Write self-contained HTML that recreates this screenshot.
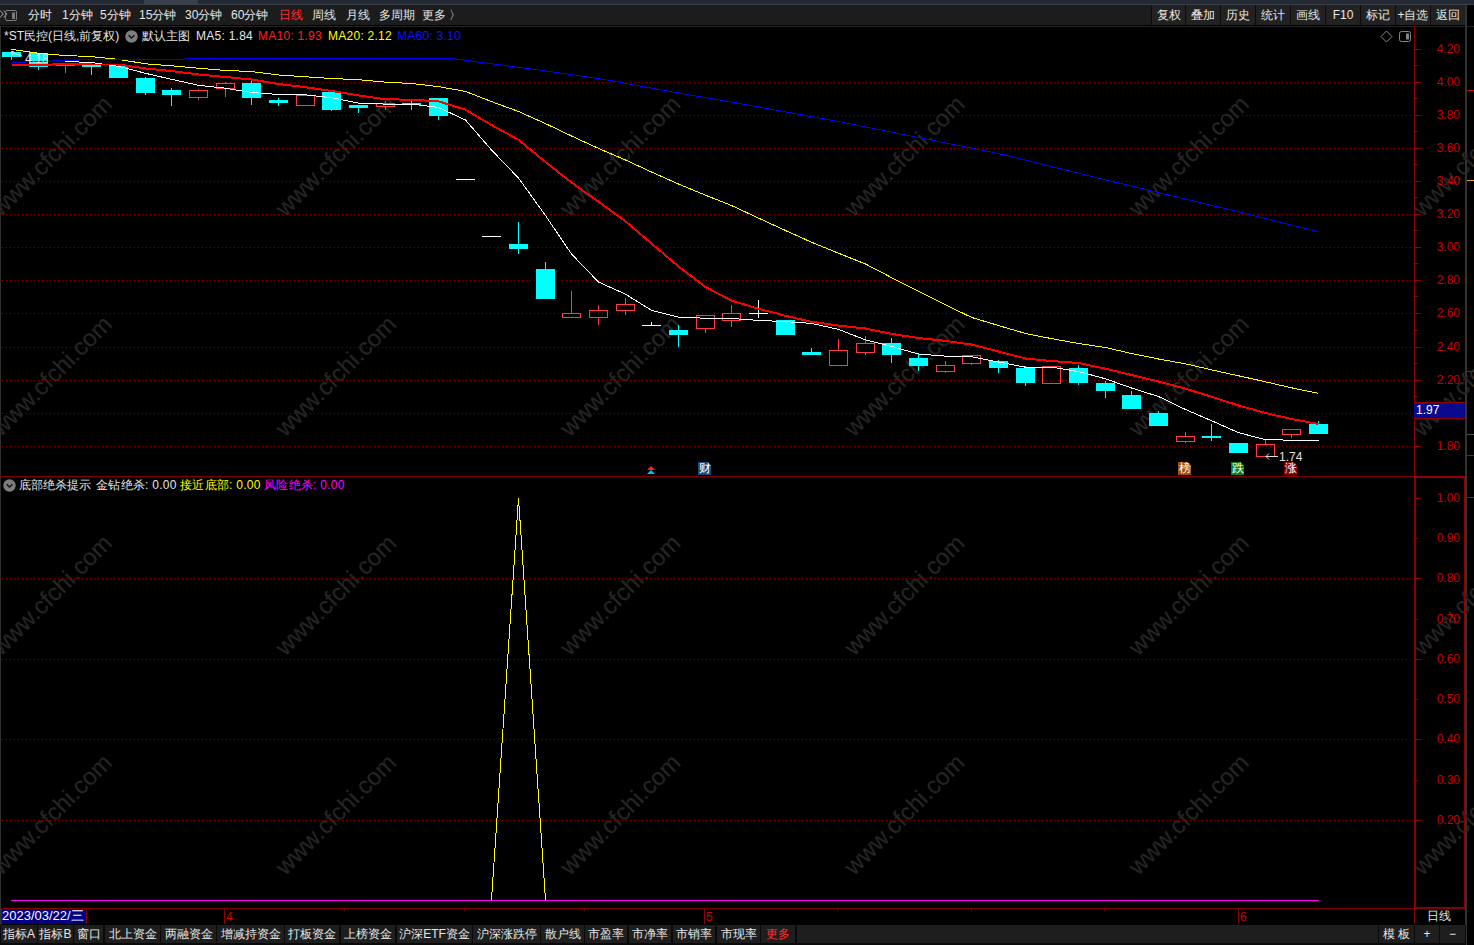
<!DOCTYPE html>
<html><head><meta charset="utf-8">
<style>
*{margin:0;padding:0;box-sizing:border-box}
html,body{width:1474px;height:945px;overflow:hidden;background:#000;font-family:"Liberation Sans",sans-serif;}
.a{position:absolute;white-space:nowrap;line-height:1}
.ls{letter-spacing:0.26px}
#top{position:absolute;left:0;top:0;width:1474px;height:4px;background:#242a33;border-bottom:0}
#tb{position:absolute;left:0;top:5px;width:1465px;height:20px;background:#1c1c1c}
.ti{position:absolute;top:9px;font-size:12px;color:#e6e6e6;line-height:12px}
.rb{position:absolute;top:5px;height:20px;background:#222;color:#e6e6e6;font-size:12px;line-height:20px;text-align:center}
.ax{position:absolute;font-size:12px;color:#c80000;line-height:12px;text-align:right;width:40px}
.tab{position:absolute;top:925px;height:18px;background:#1e1e1e;color:#e6e6e6;font-size:12px;line-height:18px;text-align:center}
</style></head><body>
<div id="top"></div><div style="position:absolute;left:0;top:4px;width:1474px;height:1px;background:#3a4049"></div><div style="position:absolute;left:144px;top:0;width:54px;height:5px;background:#3a4049"></div>
<div id="tb"></div><div style="position:absolute;left:1151px;top:5px;width:314px;height:20px;background:#0c0c0c"></div>
<!-- chart frame -->
<div style="position:absolute;left:0;top:25px;width:1474px;height:1px;background:#000"></div><div style="position:absolute;left:0;top:26px;width:1474px;height:1px;background:#262626"></div>
<div style="position:absolute;left:0;top:26px;width:1px;height:899px;background:#303030"></div>
<div style="position:absolute;left:1465px;top:5px;width:2px;height:940px;background:#333"></div>

<svg width="1474" height="945" style="position:absolute;left:0;top:0">
<g fill="#252525" font-family="Liberation Sans, sans-serif" font-size="24" text-anchor="middle" stroke="#252525" stroke-width="0.2"><text x="51.5" y="164.0" transform="rotate(-45 51.5 156.0)">www.cfchi.com</text><text x="335.8" y="164.0" transform="rotate(-45 335.8 156.0)">www.cfchi.com</text><text x="620.1" y="164.0" transform="rotate(-45 620.1 156.0)">www.cfchi.com</text><text x="904.4" y="164.0" transform="rotate(-45 904.4 156.0)">www.cfchi.com</text><text x="1188.7" y="164.0" transform="rotate(-45 1188.7 156.0)">www.cfchi.com</text><text x="1473.0" y="164.0" transform="rotate(-45 1473.0 156.0)">www.cfchi.com</text><text x="51.5" y="384.0" transform="rotate(-45 51.5 376.0)">www.cfchi.com</text><text x="335.8" y="384.0" transform="rotate(-45 335.8 376.0)">www.cfchi.com</text><text x="620.1" y="384.0" transform="rotate(-45 620.1 376.0)">www.cfchi.com</text><text x="904.4" y="384.0" transform="rotate(-45 904.4 376.0)">www.cfchi.com</text><text x="1188.7" y="384.0" transform="rotate(-45 1188.7 376.0)">www.cfchi.com</text><text x="1473.0" y="384.0" transform="rotate(-45 1473.0 376.0)">www.cfchi.com</text><text x="51.5" y="603.0" transform="rotate(-45 51.5 595.0)">www.cfchi.com</text><text x="335.8" y="603.0" transform="rotate(-45 335.8 595.0)">www.cfchi.com</text><text x="620.1" y="603.0" transform="rotate(-45 620.1 595.0)">www.cfchi.com</text><text x="904.4" y="603.0" transform="rotate(-45 904.4 595.0)">www.cfchi.com</text><text x="1188.7" y="603.0" transform="rotate(-45 1188.7 595.0)">www.cfchi.com</text><text x="1473.0" y="603.0" transform="rotate(-45 1473.0 595.0)">www.cfchi.com</text><text x="51.5" y="822.5" transform="rotate(-45 51.5 814.5)">www.cfchi.com</text><text x="335.8" y="822.5" transform="rotate(-45 335.8 814.5)">www.cfchi.com</text><text x="620.1" y="822.5" transform="rotate(-45 620.1 814.5)">www.cfchi.com</text><text x="904.4" y="822.5" transform="rotate(-45 904.4 814.5)">www.cfchi.com</text><text x="1188.7" y="822.5" transform="rotate(-45 1188.7 814.5)">www.cfchi.com</text><text x="1473.0" y="822.5" transform="rotate(-45 1473.0 814.5)">www.cfchi.com</text></g>
<g stroke="#800000" stroke-width="1" stroke-dasharray="1 3" shape-rendering="crispEdges"><line x1="2" y1="82.5" x2="1414" y2="82.5"/><line x1="2" y1="115.5" x2="1414" y2="115.5"/><line x1="2" y1="148.5" x2="1414" y2="148.5"/><line x1="2" y1="181.5" x2="1414" y2="181.5"/><line x1="2" y1="214.5" x2="1414" y2="214.5"/><line x1="2" y1="247.5" x2="1414" y2="247.5"/><line x1="2" y1="280.5" x2="1414" y2="280.5"/><line x1="2" y1="313.5" x2="1414" y2="313.5"/><line x1="2" y1="347.5" x2="1414" y2="347.5"/><line x1="2" y1="380.5" x2="1414" y2="380.5"/><line x1="2" y1="413.5" x2="1414" y2="413.5"/><line x1="2" y1="446.5" x2="1414" y2="446.5"/><line x1="2" y1="578.5" x2="1414" y2="578.5"/><line x1="2" y1="659.5" x2="1414" y2="659.5"/><line x1="2" y1="739.5" x2="1414" y2="739.5"/><line x1="2" y1="820.5" x2="1414" y2="820.5"/></g>
<g shape-rendering="crispEdges"><rect x="2" y="52" width="19" height="5" fill="#00ffff"/><rect x="11" y="57" width="1" height="3" fill="#00ffff"/><rect x="29" y="53" width="19" height="14" fill="#00ffff"/><rect x="38" y="67" width="1" height="3" fill="#00ffff"/><rect x="56.5" y="63.5" width="18" height="2" fill="none" stroke="#ff3b3b"/><rect x="65" y="66" width="1" height="7" fill="#ff3b3b"/><rect x="82" y="65" width="19" height="2" fill="#00ffff"/><rect x="91" y="67" width="1" height="8" fill="#00ffff"/><rect x="109" y="66" width="19" height="12" fill="#00ffff"/><rect x="136" y="78" width="19" height="15" fill="#00ffff"/><rect x="145" y="77" width="1" height="1" fill="#00ffff"/><rect x="145" y="93" width="1" height="2" fill="#00ffff"/><rect x="162" y="90" width="19" height="5" fill="#00ffff"/><rect x="171" y="88" width="1" height="2" fill="#00ffff"/><rect x="171" y="95" width="1" height="11" fill="#00ffff"/><rect x="189.5" y="90.5" width="18" height="7" fill="none" stroke="#ff3b3b"/><rect x="198" y="89" width="1" height="1" fill="#ff3b3b"/><rect x="198" y="98" width="1" height="2" fill="#ff3b3b"/><rect x="216.5" y="83.5" width="18" height="5" fill="none" stroke="#ff3b3b"/><rect x="225" y="82" width="1" height="1" fill="#ff3b3b"/><rect x="225" y="89" width="1" height="8" fill="#ff3b3b"/><rect x="242" y="83" width="19" height="15" fill="#00ffff"/><rect x="251" y="81" width="1" height="2" fill="#00ffff"/><rect x="251" y="98" width="1" height="7" fill="#00ffff"/><rect x="269" y="100" width="19" height="3" fill="#00ffff"/><rect x="278" y="98" width="1" height="2" fill="#00ffff"/><rect x="278" y="103" width="1" height="3" fill="#00ffff"/><rect x="296.5" y="95.5" width="18" height="10" fill="none" stroke="#ff3b3b"/><rect x="322" y="92" width="19" height="18" fill="#00ffff"/><rect x="331" y="110" width="1" height="1" fill="#00ffff"/><rect x="349" y="105" width="19" height="3" fill="#00ffff"/><rect x="358" y="108" width="1" height="5" fill="#00ffff"/><rect x="376.5" y="103.5" width="18" height="3" fill="none" stroke="#ff3b3b"/><rect x="385" y="101" width="1" height="2" fill="#ff3b3b"/><rect x="385" y="107" width="1" height="3" fill="#ff3b3b"/><rect x="402" y="103" width="19" height="2" fill="#00ffff"/><rect x="411" y="101" width="1" height="2" fill="#00ffff"/><rect x="411" y="105" width="1" height="5" fill="#00ffff"/><rect x="429" y="98" width="19" height="18" fill="#00ffff"/><rect x="438" y="116" width="1" height="4" fill="#00ffff"/><rect x="456" y="179" width="19" height="1" fill="#ffffff"/><rect x="482" y="236" width="19" height="1" fill="#ffffff"/><rect x="509" y="244" width="19" height="5" fill="#00ffff"/><rect x="518" y="222" width="1" height="22" fill="#00ffff"/><rect x="518" y="249" width="1" height="5" fill="#00ffff"/><rect x="536" y="269" width="19" height="30" fill="#00ffff"/><rect x="545" y="262" width="1" height="7" fill="#00ffff"/><rect x="562.5" y="313.5" width="18" height="4" fill="none" stroke="#ff3b3b"/><rect x="571" y="291" width="1" height="22" fill="#ff3b3b"/><rect x="589.5" y="310.5" width="18" height="7" fill="none" stroke="#ff3b3b"/><rect x="598" y="305" width="1" height="5" fill="#ff3b3b"/><rect x="598" y="318" width="1" height="7" fill="#ff3b3b"/><rect x="616.5" y="304.5" width="18" height="6" fill="none" stroke="#ff3b3b"/><rect x="625" y="298" width="1" height="6" fill="#ff3b3b"/><rect x="625" y="311" width="1" height="4" fill="#ff3b3b"/><rect x="642" y="325" width="19" height="1" fill="#ffffff"/><rect x="651" y="322" width="1" height="3" fill="#ffffff"/><rect x="669" y="330" width="19" height="5" fill="#00ffff"/><rect x="678" y="325" width="1" height="5" fill="#00ffff"/><rect x="678" y="335" width="1" height="12" fill="#00ffff"/><rect x="696.5" y="315.5" width="18" height="13" fill="none" stroke="#ff3b3b"/><rect x="705" y="329" width="1" height="4" fill="#ff3b3b"/><rect x="722.5" y="313.5" width="18" height="7" fill="none" stroke="#ff3b3b"/><rect x="731" y="305" width="1" height="8" fill="#ff3b3b"/><rect x="731" y="321" width="1" height="6" fill="#ff3b3b"/><rect x="749" y="313" width="19" height="1" fill="#ffffff"/><rect x="758" y="300" width="1" height="13" fill="#ffffff"/><rect x="758" y="314" width="1" height="4" fill="#ffffff"/><rect x="776" y="320" width="19" height="15" fill="#00ffff"/><rect x="802" y="352" width="19" height="3" fill="#00ffff"/><rect x="811" y="348" width="1" height="4" fill="#00ffff"/><rect x="829.5" y="350.5" width="18" height="15" fill="none" stroke="#ff3b3b"/><rect x="838" y="339" width="1" height="11" fill="#ff3b3b"/><rect x="856.5" y="343.5" width="18" height="9" fill="none" stroke="#ff3b3b"/><rect x="865" y="336" width="1" height="7" fill="#ff3b3b"/><rect x="865" y="353" width="1" height="2" fill="#ff3b3b"/><rect x="882" y="343" width="19" height="12" fill="#00ffff"/><rect x="891" y="338" width="1" height="5" fill="#00ffff"/><rect x="891" y="355" width="1" height="8" fill="#00ffff"/><rect x="909" y="358" width="19" height="8" fill="#00ffff"/><rect x="918" y="353" width="1" height="5" fill="#00ffff"/><rect x="918" y="366" width="1" height="5" fill="#00ffff"/><rect x="936.5" y="365.5" width="18" height="6" fill="none" stroke="#ff3b3b"/><rect x="945" y="361" width="1" height="4" fill="#ff3b3b"/><rect x="945" y="372" width="1" height="1" fill="#ff3b3b"/><rect x="962.5" y="355.5" width="18" height="8" fill="none" stroke="#ff3b3b"/><rect x="971" y="364" width="1" height="1" fill="#ff3b3b"/><rect x="989" y="361" width="19" height="7" fill="#00ffff"/><rect x="998" y="360" width="1" height="1" fill="#00ffff"/><rect x="998" y="368" width="1" height="5" fill="#00ffff"/><rect x="1016" y="368" width="19" height="15" fill="#00ffff"/><rect x="1025" y="366" width="1" height="2" fill="#00ffff"/><rect x="1025" y="383" width="1" height="3" fill="#00ffff"/><rect x="1042.5" y="366.5" width="18" height="17" fill="none" stroke="#ff3b3b"/><rect x="1069" y="368" width="19" height="15" fill="#00ffff"/><rect x="1078" y="365" width="1" height="3" fill="#00ffff"/><rect x="1078" y="383" width="1" height="2" fill="#00ffff"/><rect x="1096" y="383" width="19" height="8" fill="#00ffff"/><rect x="1105" y="381" width="1" height="2" fill="#00ffff"/><rect x="1105" y="391" width="1" height="7" fill="#00ffff"/><rect x="1122" y="395" width="19" height="14" fill="#00ffff"/><rect x="1131" y="391" width="1" height="4" fill="#00ffff"/><rect x="1149" y="413" width="19" height="13" fill="#00ffff"/><rect x="1158" y="411" width="1" height="2" fill="#00ffff"/><rect x="1176.5" y="436.5" width="18" height="5" fill="none" stroke="#ff3b3b"/><rect x="1185" y="432" width="1" height="4" fill="#ff3b3b"/><rect x="1185" y="442" width="1" height="1" fill="#ff3b3b"/><rect x="1202" y="436" width="19" height="2" fill="#00ffff"/><rect x="1211" y="424" width="1" height="12" fill="#00ffff"/><rect x="1211" y="438" width="1" height="3" fill="#00ffff"/><rect x="1229" y="443" width="19" height="10" fill="#00ffff"/><rect x="1256.5" y="444.5" width="18" height="12" fill="none" stroke="#ff3b3b"/><rect x="1265" y="439" width="1" height="5" fill="#ff3b3b"/><rect x="1282.5" y="429.5" width="18" height="5" fill="none" stroke="#ff3b3b"/><rect x="1291" y="435" width="1" height="3" fill="#ff3b3b"/><rect x="1309" y="424" width="19" height="10" fill="#00ffff"/><rect x="1318" y="421" width="1" height="3" fill="#00ffff"/></g>
<polyline fill="none" shape-rendering="crispEdges" stroke="#ffffff" stroke-width="1" points="65.5,61.5 91.5,62.5 118.5,66.3 145.5,73.3 171.5,79.3 198.5,85.3 225.5,88.2 251.5,92.5 278.5,94.5 305.5,94.8 331.5,97.7 358.5,103.1 385.5,104.1 411.5,104.1 438.5,107.5 465.5,120.0 491.5,150.0 518.5,178.0 545.5,215.6 571.5,254.0 598.5,282.0 625.5,294.2 651.5,310.3 678.5,317.2 705.5,318.2 731.5,318.5 758.5,320.4 785.5,321.6 811.5,323.4 838.5,329.4 865.5,339.9 891.5,346.4 918.5,354.0 945.5,356.1 971.5,356.7 998.5,362.0 1025.5,367.2 1051.5,367.2 1078.5,371.5 1105.5,378.8 1131.5,388.0 1158.5,396.5 1185.5,409.5 1211.5,420.7 1238.5,432.7 1265.5,439.6 1291.5,440.2 1318.5,440.2"/>
<polyline fill="none" shape-rendering="crispEdges" stroke="#ff0000" stroke-width="2" points="11.5,65.0 38.5,65.0 65.5,64.0 91.5,64.5 118.5,64.5 145.5,68.5 171.5,71.0 198.5,74.5 225.5,77.0 251.5,79.5 278.5,84.0 305.5,87.2 331.5,91.0 358.5,95.4 385.5,99.3 411.5,99.7 438.5,101.3 465.5,109.7 491.5,125.0 518.5,139.8 545.5,162.0 571.5,182.5 598.5,201.7 625.5,221.3 651.5,243.5 678.5,266.5 705.5,287.0 731.5,300.6 758.5,308.8 785.5,315.8 811.5,321.8 838.5,325.6 865.5,328.5 891.5,333.9 918.5,338.0 945.5,340.9 971.5,344.5 998.5,351.5 1025.5,358.5 1051.5,361.0 1078.5,363.0 1105.5,368.7 1131.5,375.0 1158.5,381.5 1185.5,388.7 1211.5,396.7 1238.5,405.5 1265.5,413.0 1291.5,419.0 1318.5,424.0"/>
<polyline fill="none" shape-rendering="crispEdges" stroke="#ffff00" stroke-width="1" points="11.5,49.4 38.5,53.3 65.5,55.5 91.5,56.6 118.5,59.4 145.5,63.8 171.5,65.8 198.5,68.2 225.5,70.5 251.5,71.5 278.5,75.0 305.5,76.8 331.5,78.5 358.5,79.7 385.5,82.1 411.5,83.5 438.5,86.6 465.5,91.4 491.5,101.6 518.5,111.5 545.5,123.6 571.5,136.0 598.5,148.4 625.5,160.0 651.5,172.0 678.5,184.0 705.5,195.2 731.5,205.5 758.5,218.1 785.5,230.5 811.5,242.2 838.5,253.2 865.5,264.0 891.5,277.6 918.5,291.2 945.5,304.8 971.5,317.4 998.5,325.5 1025.5,333.5 1051.5,338.6 1078.5,343.5 1105.5,347.5 1131.5,353.5 1158.5,359.0 1185.5,363.8 1211.5,369.8 1238.5,375.8 1265.5,381.8 1291.5,387.8 1318.5,393.4"/>
<polyline fill="none" shape-rendering="crispEdges" stroke="#0000ff" stroke-width="1" points="11.7,62.5 25.0,62.5 25.0,61.5 52.0,61.5 52.0,60.4 78.0,60.4 78.0,59.5 185.0,59.5 185.0,58.5 451.7,58.5 541.8,70.4 602.8,79.2 663.9,90.4 740.0,103.6 840.0,121.8 1000.0,153.9 1111.9,181.4 1223.9,208.3 1317.9,231.8"/>
<polyline fill="none" shape-rendering="crispEdges" stroke="#ffff00" stroke-width="1" points="491.5,900 518.5,498 545.5,900"/>
<rect x="11" y="900" width="1308" height="1" fill="#ff00ff"/>
</svg>

<!-- toolbar text -->
<svg width="20" height="20" style="position:absolute;left:0;top:5px">
<path d="M0 5.5 L3.2 9 L0 12.5 M3.6 5.5 L6.8 9 L3.6 12.5" stroke="#8c8c8c" stroke-width="1.1" fill="none"/>
<rect x="5.5" y="5.5" width="11" height="10" rx="1.5" fill="none" stroke="#7a7a7a"/>
<rect x="12" y="7.5" width="3" height="6.5" fill="#7a7a7a"/>
</svg>
<div class="ti" style="left:28px">分时</div>
<div class="ti" style="left:62px">1分钟</div>
<div class="ti" style="left:100px">5分钟</div>
<div class="ti" style="left:139px">15分钟</div>
<div class="ti" style="left:185px">30分钟</div>
<div class="ti" style="left:231px">60分钟</div>
<div class="ti" style="left:279px;color:#ff3030">日线</div>
<div class="ti" style="left:312px">周线</div>
<div class="ti" style="left:346px">月线</div>
<div class="ti" style="left:379px">多周期</div>
<div class="ti" style="left:422px">更多 〉</div>

<div class="rb" style="left:1152px;width:33px">复权</div>
<div class="rb" style="left:1186px;width:34px">叠加</div>
<div class="rb" style="left:1221px;width:34px">历史</div>
<div class="rb" style="left:1256px;width:34px">统计</div>
<div class="rb" style="left:1291px;width:34px">画线</div>
<div class="rb" style="left:1326px;width:34px">F10</div>
<div class="rb" style="left:1361px;width:34px">标记</div>
<div class="rb" style="left:1396px;width:34px">+自选</div>
<div class="rb" style="left:1431px;width:34px">返回</div>

<!-- title -->
<div class="a" style="left:4px;top:30px;font-size:12px;color:#e6e6e6">*ST民控(日线,前复权)</div>
<svg width="13" height="13" style="position:absolute;left:125px;top:30px"><circle cx="6.5" cy="6.5" r="6.2" fill="#7e7e7e"/><path d="M3.6 5.2 L6.5 8 L9.4 5.2" stroke="#111" stroke-width="1.4" fill="none"/></svg>
<div class="a" style="left:142px;top:30px;font-size:12px;color:#e6e6e6">默认主图</div>
<div class="a" style="left:196px;top:30px;font-size:12px;color:#e6e6e6;letter-spacing:0.26px">MA5: 1.84</div>
<div class="a" style="left:258px;top:30px;font-size:12px;color:#ff2020;letter-spacing:0.26px">MA10: 1.93</div>
<div class="a" style="left:328px;top:30px;font-size:12px;color:#ffff00;letter-spacing:0.26px">MA20: 2.12</div>
<div class="a" style="left:397px;top:30px;font-size:12px;color:#1010ff;letter-spacing:0.26px">MA60: 3.10</div>

<!-- lower panel title -->
<svg width="13" height="13" style="position:absolute;left:3px;top:479px"><circle cx="6.5" cy="6.5" r="6.2" fill="#7e7e7e"/><path d="M3.6 5.2 L6.5 8 L9.4 5.2" stroke="#111" stroke-width="1.4" fill="none"/></svg>
<div class="a" style="left:19px;top:479px;font-size:12px;color:#e6e6e6">底部绝杀提示</div>
<div class="a" style="left:96px;top:479px;font-size:12px;color:#e6e6e6;letter-spacing:0.26px">金钻绝杀: 0.00</div>
<div class="a" style="left:180px;top:479px;font-size:12px;color:#ffff00;letter-spacing:0.26px">接近底部: 0.00</div>
<div class="a" style="left:264px;top:479px;font-size:12px;color:#ff00ff;letter-spacing:0.26px">风险绝杀: 0.00</div>

<div style="position:absolute;left:1414px;top:26px;width:1px;height:898px;background:#900000"></div>
<div style="position:absolute;left:1415px;top:49px;width:6px;height:1px;background:#900000"></div>
<div style="position:absolute;left:1415px;top:65px;width:3px;height:1px;background:#900000"></div>
<div class="ax" style="left:1420px;top:43px">4.20</div>
<div style="position:absolute;left:1415px;top:82px;width:6px;height:1px;background:#900000"></div>
<div style="position:absolute;left:1415px;top:98px;width:3px;height:1px;background:#900000"></div>
<div class="ax" style="left:1420px;top:76px">4.00</div>
<div style="position:absolute;left:1415px;top:115px;width:6px;height:1px;background:#900000"></div>
<div style="position:absolute;left:1415px;top:131px;width:3px;height:1px;background:#900000"></div>
<div class="ax" style="left:1420px;top:109px">3.80</div>
<div style="position:absolute;left:1415px;top:148px;width:6px;height:1px;background:#900000"></div>
<div style="position:absolute;left:1415px;top:164px;width:3px;height:1px;background:#900000"></div>
<div class="ax" style="left:1420px;top:142px">3.60</div>
<div style="position:absolute;left:1415px;top:181px;width:6px;height:1px;background:#900000"></div>
<div style="position:absolute;left:1415px;top:197px;width:3px;height:1px;background:#900000"></div>
<div class="ax" style="left:1420px;top:175px">3.40</div>
<div style="position:absolute;left:1415px;top:214px;width:6px;height:1px;background:#900000"></div>
<div style="position:absolute;left:1415px;top:230px;width:3px;height:1px;background:#900000"></div>
<div class="ax" style="left:1420px;top:208px">3.20</div>
<div style="position:absolute;left:1415px;top:247px;width:6px;height:1px;background:#900000"></div>
<div style="position:absolute;left:1415px;top:263px;width:3px;height:1px;background:#900000"></div>
<div class="ax" style="left:1420px;top:241px">3.00</div>
<div style="position:absolute;left:1415px;top:280px;width:6px;height:1px;background:#900000"></div>
<div style="position:absolute;left:1415px;top:296px;width:3px;height:1px;background:#900000"></div>
<div class="ax" style="left:1420px;top:274px">2.80</div>
<div style="position:absolute;left:1415px;top:313px;width:6px;height:1px;background:#900000"></div>
<div style="position:absolute;left:1415px;top:330px;width:3px;height:1px;background:#900000"></div>
<div class="ax" style="left:1420px;top:307px">2.60</div>
<div style="position:absolute;left:1415px;top:347px;width:6px;height:1px;background:#900000"></div>
<div style="position:absolute;left:1415px;top:363px;width:3px;height:1px;background:#900000"></div>
<div class="ax" style="left:1420px;top:341px">2.40</div>
<div style="position:absolute;left:1415px;top:380px;width:6px;height:1px;background:#900000"></div>
<div style="position:absolute;left:1415px;top:396px;width:3px;height:1px;background:#900000"></div>
<div class="ax" style="left:1420px;top:374px">2.20</div>
<div style="position:absolute;left:1415px;top:413px;width:6px;height:1px;background:#900000"></div>
<div style="position:absolute;left:1415px;top:429px;width:3px;height:1px;background:#900000"></div>
<div style="position:absolute;left:1415px;top:446px;width:6px;height:1px;background:#900000"></div>
<div class="ax" style="left:1420px;top:440px">1.80</div>
<div style="position:absolute;left:1414px;top:402px;width:51px;height:17px;background:#0a0a8c;border-top:1px solid #900000;border-bottom:1px solid #900000"></div>
<div class="a" style="left:1416px;top:404px;font-size:12px;color:#fff">1.97</div>
<div style="position:absolute;left:0;top:476px;width:1466px;height:1px;background:#800000"></div>
<div style="position:absolute;left:1414px;top:476px;width:51px;height:432px;border:1px solid #900000;border-top:2px solid #900000;border-left:2px solid #900000"></div>
<div style="position:absolute;left:1415px;top:498px;width:6px;height:1px;background:#900000"></div>
<div class="ax" style="left:1420px;top:492px">1.00</div>
<div style="position:absolute;left:1415px;top:538px;width:3px;height:1px;background:#900000"></div>
<div class="ax" style="left:1420px;top:532px">0.90</div>
<div style="position:absolute;left:1415px;top:578px;width:6px;height:1px;background:#900000"></div>
<div class="ax" style="left:1420px;top:572px">0.80</div>
<div style="position:absolute;left:1415px;top:619px;width:3px;height:1px;background:#900000"></div>
<div class="ax" style="left:1420px;top:613px">0.70</div>
<div style="position:absolute;left:1415px;top:659px;width:6px;height:1px;background:#900000"></div>
<div class="ax" style="left:1420px;top:653px">0.60</div>
<div style="position:absolute;left:1415px;top:699px;width:3px;height:1px;background:#900000"></div>
<div class="ax" style="left:1420px;top:693px">0.50</div>
<div style="position:absolute;left:1415px;top:739px;width:6px;height:1px;background:#900000"></div>
<div class="ax" style="left:1420px;top:733px">0.40</div>
<div style="position:absolute;left:1415px;top:780px;width:3px;height:1px;background:#900000"></div>
<div class="ax" style="left:1420px;top:774px">0.30</div>
<div style="position:absolute;left:1415px;top:820px;width:6px;height:1px;background:#900000"></div>
<div class="ax" style="left:1420px;top:814px">0.20</div>
<div style="position:absolute;left:1467px;top:90px;width:7px;height:1px;background:#c00000"></div>
<div style="position:absolute;left:1467px;top:180px;width:7px;height:1px;background:#e0a030"></div>
<div style="position:absolute;left:1467px;top:371px;width:7px;height:1px;background:#c00000"></div>
<div style="position:absolute;left:1467px;top:434px;width:7px;height:1px;background:#555"></div>
<div style="position:absolute;left:1467px;top:455px;width:7px;height:1px;background:#c00000"></div>
<div style="position:absolute;left:1467px;top:497px;width:7px;height:1px;background:#c00000"></div>
<svg width="34" height="16" style="position:absolute;left:1378px;top:29px"><path d="M8.5 2 L14 7.5 L8.5 13 L3 7.5 Z" fill="none" stroke="#8a8a8a"/><rect x="21.5" y="2.5" width="11" height="10" rx="2" fill="none" stroke="#858585"/><rect x="28" y="4.5" width="3" height="6" fill="#858585"/></svg>
<div style="position:absolute;left:344px;top:909px;width:1px;height:2px;background:#900000"></div>
<div style="position:absolute;left:464px;top:909px;width:1px;height:2px;background:#900000"></div>
<div style="position:absolute;left:584px;top:909px;width:1px;height:2px;background:#900000"></div>
<div style="position:absolute;left:837px;top:909px;width:1px;height:2px;background:#900000"></div>
<div style="position:absolute;left:971px;top:909px;width:1px;height:2px;background:#900000"></div>
<div style="position:absolute;left:1104px;top:909px;width:1px;height:2px;background:#900000"></div>
<div style="position:absolute;left:224px;top:909px;width:1px;height:15px;background:#900000"></div>
<div class="a" style="left:226px;top:911px;font-size:12px;color:#d00000">4</div>
<div style="position:absolute;left:704px;top:909px;width:1px;height:15px;background:#900000"></div>
<div class="a" style="left:706px;top:911px;font-size:12px;color:#d00000">5</div>
<div style="position:absolute;left:1238px;top:909px;width:1px;height:15px;background:#900000"></div>
<div class="a" style="left:1240px;top:911px;font-size:12px;color:#d00000">6</div>
<div class="a" style="left:1427px;top:910px;font-size:12px;color:#e6e6e6">日线</div>
<svg width="8" height="10" style="position:absolute;left:647px;top:465px"><path d="M0 5 L4 1 L8 5 Z" fill="#ff2020"/><path d="M0 9 L4 5 L8 9 Z" fill="#00c0ff"/></svg>
<div style="position:absolute;left:698px;top:462px;width:13px;height:13px;background:#1e4a7a;color:#fff;font-size:12px;line-height:13px;text-align:center;clip-path:polygon(0 0,75% 0,100% 25%,100% 100%,0 100%)">财</div>
<div style="position:absolute;left:1178px;top:462px;width:13px;height:13px;background:#9a5010;color:#fff;font-size:12px;line-height:13px;text-align:center;clip-path:polygon(0 0,75% 0,100% 25%,100% 100%,0 100%)">榜</div>
<div style="position:absolute;left:1231px;top:462px;width:13px;height:13px;background:#108010;color:#fff;font-size:12px;line-height:13px;text-align:center;clip-path:polygon(0 0,75% 0,100% 25%,100% 100%,0 100%)">跌</div>
<div style="position:absolute;left:1284px;top:462px;width:13px;height:13px;background:#800000;color:#fff;font-size:12px;line-height:13px;text-align:center;clip-path:polygon(0 0,75% 0,100% 25%,100% 100%,0 100%)">涨</div>
<div class="a" style="left:25px;top:53px;font-size:12px;color:#e0e0e0">4.18</div>
<svg width="14" height="8" style="position:absolute;left:10px;top:51px"><path d="M1 1 L12 5 M1 1 L4 0 M1 1 L3 4" stroke="#e0e0e0" fill="none"/></svg>
<svg width="14" height="8" style="position:absolute;left:1265px;top:452px"><path d="M1 4.5 L13 4.5 M1 4.5 L4 1.5 M1 4.5 L4 7.5" stroke="#e0e0e0" fill="none"/></svg>
<div class="a" style="left:1279px;top:451px;font-size:12px;color:#e0e0e0">1.74</div>

<!-- date axis -->
<div style="position:absolute;left:2px;top:908px;width:1463px;height:1px;background:#800000"></div>
<div style="position:absolute;left:1px;top:908px;width:86px;height:16px;background:#000080;border:1px solid #900000;border-bottom:0"></div>
<div class="a" style="left:2px;top:909px;font-size:13px;color:#fff">2023/03/22/三</div>

<!-- tabs -->
<div style="position:absolute;left:0;top:925px;width:1466px;height:20px;background:#0a0a0a"></div>
<div class="tab" style="left:1px;width:36px;color:#e6e6e6">指标A</div>
<div class="tab" style="left:38px;width:35px;color:#e6e6e6">指标B</div>
<div class="tab" style="left:74px;width:29px;color:#e6e6e6">窗口</div>
<div class="tab" style="left:105px;width:55px;color:#e6e6e6">北上资金</div>
<div class="tab" style="left:161px;width:55px;color:#e6e6e6">两融资金</div>
<div class="tab" style="left:217px;width:67px;color:#e6e6e6">增减持资金</div>
<div class="tab" style="left:285px;width:54px;color:#e6e6e6">打板资金</div>
<div class="tab" style="left:341px;width:54px;color:#e6e6e6">上榜资金</div>
<div class="tab" style="left:397px;width:75px;color:#e6e6e6">沪深ETF资金</div>
<div class="tab" style="left:473px;width:67px;color:#e6e6e6">沪深涨跌停</div>
<div class="tab" style="left:541px;width:43px;color:#e6e6e6">散户线</div>
<div class="tab" style="left:585px;width:42px;color:#e6e6e6">市盈率</div>
<div class="tab" style="left:629px;width:42px;color:#e6e6e6">市净率</div>
<div class="tab" style="left:673px;width:42px;color:#e6e6e6">市销率</div>
<div class="tab" style="left:717px;width:43px;color:#e6e6e6">市现率</div>
<div class="tab" style="left:761px;width:34px;color:#ff3030">更多</div>
<div class="tab" style="left:797px;width:581px;color:#e6e6e6"></div>
<div class="tab" style="left:1379px;width:35px;color:#e6e6e6">模 板</div>
<div class="tab" style="left:1415px;width:24px;color:#e6e6e6">+</div>
<div class="tab" style="left:1440px;width:25px;color:#e6e6e6">−</div>
</body></html>
